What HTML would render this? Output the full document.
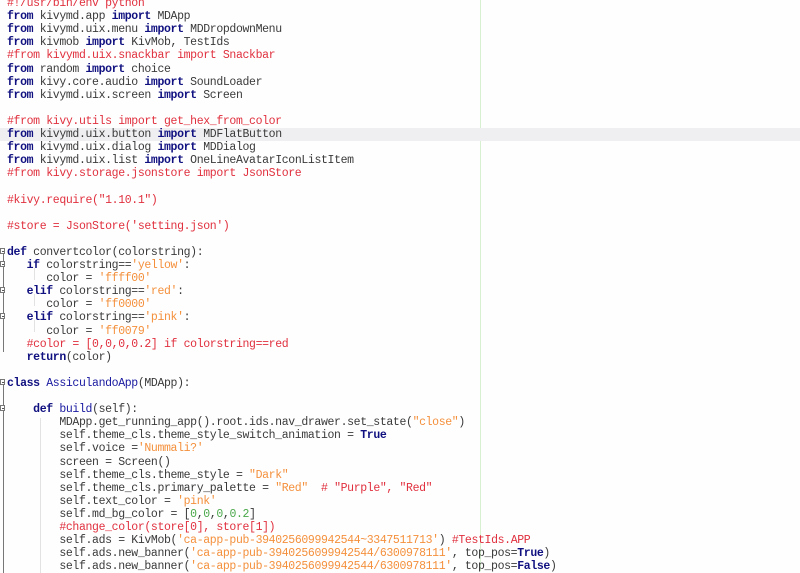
<!DOCTYPE html>
<html><head><meta charset="utf-8"><style>
body{margin:0;width:800px;height:571px;overflow:hidden;background:#fefefe;position:relative;font-family:"Liberation Mono","DejaVu Sans Mono",monospace;}
#w{position:absolute;left:0;top:1.5px;width:800px;height:571px}
.l{position:absolute;left:7px;height:13px;line-height:13px;font-size:11.5px;letter-spacing:-0.36px;white-space:pre;color:#3a3a3a;}
.k{color:#101080;font-weight:bold}
.c{color:#e0303e}
.s{color:#f4903c}
.n{color:#4aa84a}
.hl{position:absolute;left:0;width:800px;height:13px;background:#efeff1}
.edge{position:absolute;left:480px;top:0;width:1px;height:571px;background:#d6f0d0}
.gut{position:absolute;left:3px;width:1px;background:#777}
.fb{position:absolute;left:0;width:5px;height:6px;border:1px solid #777;background:#fff;box-sizing:border-box}
.fb:after{content:"";position:absolute;left:1px;top:2px;width:2px;height:1px;background:#555}
.ig{position:absolute;width:1px;background:#e2e2e2}
</style></head><body>
<div class="edge"></div>
<div id="w">
<div class="hl" style="top:126px"></div>
<div class="gut" style="top:252px;height:98px"></div>
<div class="gut" style="top:383px;height:188px"></div>
<div class="fb" style="top:246px"></div>
<div class="fb" style="top:259px"></div>
<div class="fb" style="top:285px"></div>
<div class="fb" style="top:311px"></div>
<div class="fb" style="top:377px"></div>
<div class="fb" style="top:403px"></div>
<div class="ig" style="left:34px;top:266px;height:12px"></div>
<div class="ig" style="left:34px;top:292px;height:12px"></div>
<div class="ig" style="left:34px;top:318px;height:12px"></div>
<div class="ig" style="left:40px;top:416px;height:155px"></div>

<div class="l" style="top:-4.5px"><span class="c">#!/usr/bin/env python</span></div>
<div class="l" style="top:8.6px"><span class="k">from</span> kivymd.app <span class="k">import</span> MDApp</div>
<div class="l" style="top:21.7px"><span class="k">from</span> kivymd.uix.menu <span class="k">import</span> MDDropdownMenu</div>
<div class="l" style="top:34.8px"><span class="k">from</span> kivmob <span class="k">import</span> KivMob, TestIds</div>
<div class="l" style="top:47.9px"><span class="c">#from kivymd.uix.snackbar import Snackbar</span></div>
<div class="l" style="top:61px"><span class="k">from</span> random <span class="k">import</span> choice</div>
<div class="l" style="top:74.1px"><span class="k">from</span> kivy.core.audio <span class="k">import</span> SoundLoader</div>
<div class="l" style="top:87.2px"><span class="k">from</span> kivymd.uix.screen <span class="k">import</span> Screen</div>
<div class="l" style="top:113.4px"><span class="c">#from kivy.utils import get_hex_from_color</span></div>
<div class="l" style="top:126.5px"><span class="k">from</span> kivymd.uix.button <span class="k">import</span> MDFlatButton</div>
<div class="l" style="top:139.6px"><span class="k">from</span> kivymd.uix.dialog <span class="k">import</span> MDDialog</div>
<div class="l" style="top:152.7px"><span class="k">from</span> kivymd.uix.list <span class="k">import</span> OneLineAvatarIconListItem</div>
<div class="l" style="top:165.8px"><span class="c">#from kivy.storage.jsonstore import JsonStore</span></div>
<div class="l" style="top:192px"><span class="c">#kivy.require("1.10.1")</span></div>
<div class="l" style="top:218.2px"><span class="c">#store = JsonStore('setting.json')</span></div>
<div class="l" style="top:244.4px"><span class="k">def</span> convertcolor(colorstring):</div>
<div class="l" style="top:257.5px">   <span class="k">if</span> colorstring==<span class="s">'yellow'</span>:</div>
<div class="l" style="top:270.6px">      color = <span class="s">'ffff00'</span></div>
<div class="l" style="top:283.7px">   <span class="k">elif</span> colorstring==<span class="s">'red'</span>:</div>
<div class="l" style="top:296.8px">      color = <span class="s">'ff0000'</span></div>
<div class="l" style="top:309.9px">   <span class="k">elif</span> colorstring==<span class="s">'pink'</span>:</div>
<div class="l" style="top:323px">      color = <span class="s">'ff0079'</span></div>
<div class="l" style="top:336.1px">   <span class="c">#color = [0,0,0,0.2] if colorstring==red</span></div>
<div class="l" style="top:349.2px">   <span class="k">return</span>(color)</div>
<div class="l" style="top:375.4px"><span class="k">class</span> <span style="color:#1818a0">AssiculandoApp</span>(MDApp):</div>
<div class="l" style="top:401.6px">    <span class="k">def</span> <span style="color:#1818a0">build</span>(self):</div>
<div class="l" style="top:414.7px">        MDApp.get_running_app().root.ids.nav_drawer.set_state(<span class="s">"close"</span>)</div>
<div class="l" style="top:427.8px">        self.theme_cls.theme_style_switch_animation = <span class="k">True</span></div>
<div class="l" style="top:440.9px">        self.voice =<span class="s">'Nummali?'</span></div>
<div class="l" style="top:454px">        screen = Screen()</div>
<div class="l" style="top:467.1px">        self.theme_cls.theme_style = <span class="s">"Dark"</span></div>
<div class="l" style="top:480.2px">        self.theme_cls.primary_palette = <span class="s">"Red"</span>  <span class="c"># "Purple", "Red"</span></div>
<div class="l" style="top:493.3px">        self.text_color = <span class="s">'pink'</span></div>
<div class="l" style="top:506.4px">        self.md_bg_color = [<span class="n">0</span>,<span class="n">0</span>,<span class="n">0</span>,<span class="n">0.2</span>]</div>
<div class="l" style="top:519.5px">        <span class="c">#change_color(store[0], store[1])</span></div>
<div class="l" style="top:532.6px">        self.ads = KivMob(<span class="s">'ca-app-pub-3940256099942544~3347511713'</span>) <span class="c">#TestIds.APP</span></div>
<div class="l" style="top:545.7px">        self.ads.new_banner(<span class="s">'ca-app-pub-3940256099942544/6300978111'</span>, top_pos=<span class="k">True</span>)</div>
<div class="l" style="top:558.8px">        self.ads.new_banner(<span class="s">'ca-app-pub-3940256099942544/6300978111'</span>, top_pos=<span class="k">False</span>)</div>
</div>
</body></html>
